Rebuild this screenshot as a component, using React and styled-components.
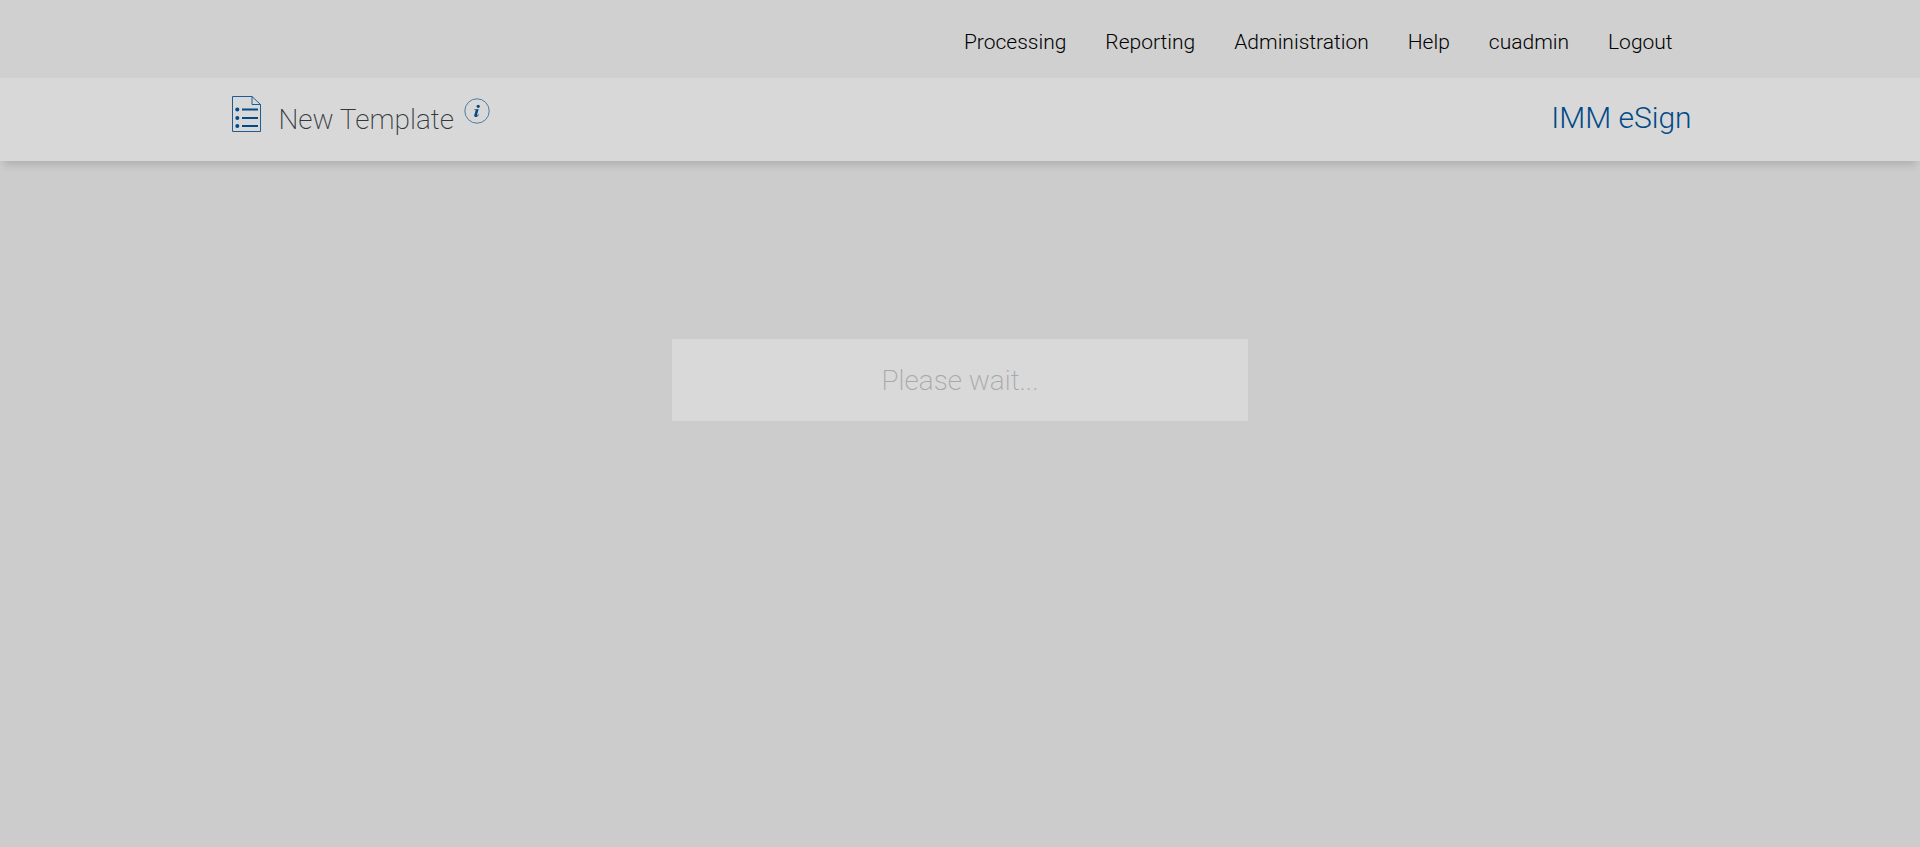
import React from "react";
import styled, { createGlobalStyle } from "styled-components";

const GlobalStyle = createGlobalStyle`
  *, *::before, *::after { box-sizing: border-box; }
  body {
    margin: 0;
    background: #cccccc;
    font-family: Roboto, "Liberation Sans", sans-serif;
    font-weight: 300;
  }
`;

const TopBar = styled.header`
  display: flex;
  justify-content: flex-end;
  align-items: center;
  height: 78px;
  padding: 6px 12% 0;
  background: #d0d0d0;
`;

const Nav = styled.nav`
  display: flex;
  gap: 39px;
  padding-right: 17px;
`;

const NavLink = styled.a`
  color: #000000;
  font-size: 21px;
  line-height: 28px;
  text-decoration: none;
`;

const TitleBar = styled.div`
  display: flex;
  justify-content: space-between;
  align-items: flex-start;
  height: 83px;
  padding: 16px calc(12% - 2px) 0 12%;
  background: #d8d8d8;
  box-shadow: 0 8px 8px -4px rgba(0, 0, 0, 0.14);
`;

const TitleGroup = styled.div`
  display: flex;
  align-items: flex-start;
`;

const Title = styled.h1`
  margin: 0 10px 0 16px;
  padding-top: 8px;
  color: #33383d;
  font-size: 28px;
  font-weight: 200;
  line-height: 36px;
`;

const InfoButton = styled.button`
  display: flex;
  margin: 0;
  padding: 0;
  border: 0;
  background: none;
  cursor: pointer;
`;

const Brand = styled.div`
  padding-top: 6px;
  color: #004b87;
  font-size: 30px;
  line-height: 36px;
`;

const Main = styled.main`
  display: flex;
  justify-content: center;
  padding-top: 178px;
`;

const WaitMessage = styled.div`
  width: 30%;
  padding: 24px 16px 22px;
  background: #d9d9d9;
  color: #a8a8a8;
  font-size: 28px;
  font-weight: 200;
  line-height: 36px;
  text-align: center;
`;

const navItems = ["Processing", "Reporting", "Administration", "Help", "cuadmin", "Logout"];

function TemplateIcon() {
  return (
    <svg width="32" height="38" viewBox="0 0 32 38" fill="none" stroke="#1f5c93" aria-hidden="true">
      <path d="M2.5 2.5H22L30.500 10.500V37.500H2.500Z" />
      <path d="M22 2.500V10.500H30.500" />
      <path d="M12 15.500H28M12 24H28M12 32H28" stroke="#004b87" strokeWidth="1.800" />
      <g fill="#004b87" stroke="none">
        <circle cx="7.300" cy="15.500" r="2" />
        <circle cx="7.300" cy="24" r="2" />
        <circle cx="7.300" cy="32" r="2" />
      </g>
    </svg>
  );
}

function InfoIcon() {
  return (
    <svg width="26" height="30" viewBox="0 0 26 30" aria-hidden="true">
      <circle cx="13" cy="17" r="12.200" fill="none" stroke="#4e7b9f" />
      <g fill="#004b87" transform="translate(0 2)">
        <circle cx="14.200" cy="10.300" r="1.600" />
        <path d="M10.200 13.400L14.600 12.900L13 19C12.800 19.800 13.300 19.700 14.500 18.300L15 18.700C13.800 20.400 12.800 21 11.700 21C10.300 21 10 20.200 10.300 19L11.600 14.700C11.700 14.100 11.400 14 10.100 14Z" />
      </g>
    </svg>
  );
}

export default function App() {
  return (
    <>
      <GlobalStyle />
      <TopBar>
        <Nav aria-label="Main">
          {navItems.map((item) => (
            <NavLink href="#" key={item}>{item}</NavLink>
          ))}
        </Nav>
      </TopBar>
      <TitleBar>
        <TitleGroup>
          <TemplateIcon />
          <Title>New Template</Title>
          <InfoButton type="button" aria-label="Information">
            <InfoIcon />
          </InfoButton>
        </TitleGroup>
        <Brand>IMM eSign</Brand>
      </TitleBar>
      <Main>
        <WaitMessage role="status">Please wait...</WaitMessage>
      </Main>
    </>
  );
}
